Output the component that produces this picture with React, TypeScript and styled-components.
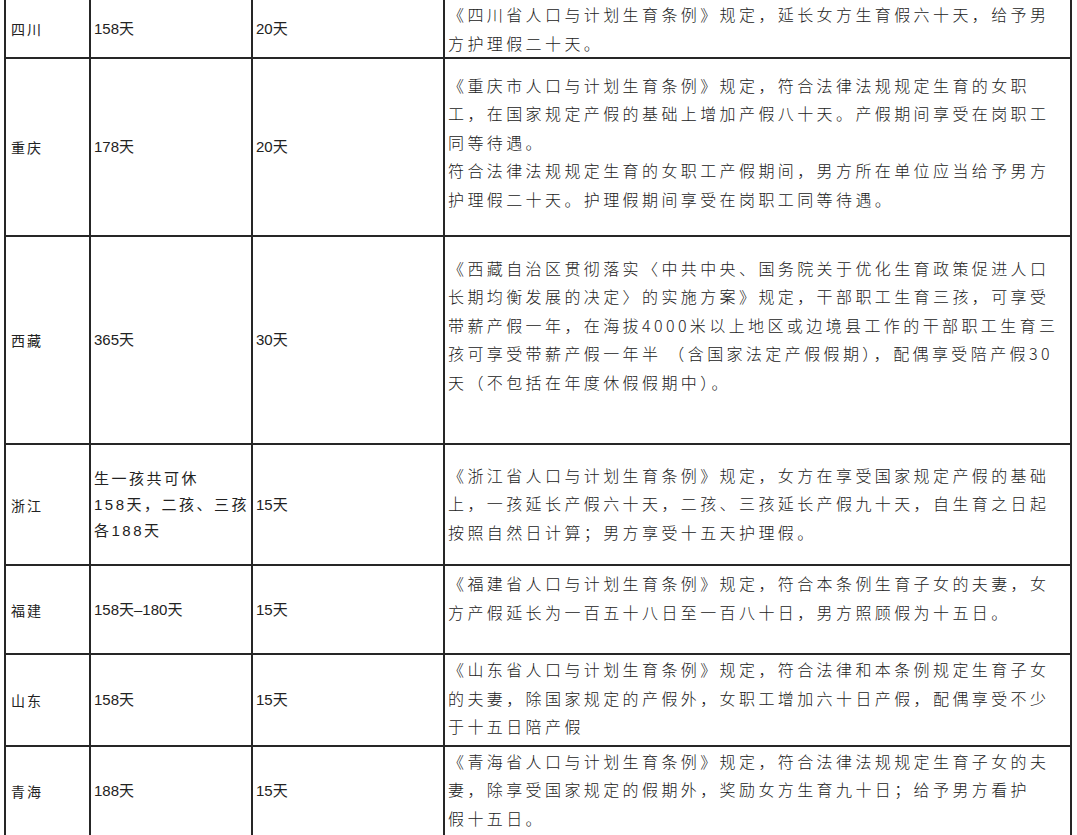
import styled, { createGlobalStyle } from 'styled-components';

type Row = {
  region: string;
  maternity: string[];
  paternity: string;
  policy: string[];
  height: number;
  lift?: number;
};

const rows: Row[] = [
  {
    region: '四川',
    maternity: ['158天'],
    paternity: '20天',
    policy: ['《四川省人口与计划生育条例》规定，延长女方生育假六十天，给予男', '方护理假二十天。'],
    height: 59,
  },
  {
    region: '重庆',
    maternity: ['178天'],
    paternity: '20天',
    policy: [
      '《重庆市人口与计划生育条例》规定，符合法律法规规定生育的女职',
      '工，在国家规定产假的基础上增加产假八十天。产假期间享受在岗职工',
      '同等待遇。',
      '符合法律法规规定生育的女职工产假期间，男方所在单位应当给予男方',
      '护理假二十天。护理假期间享受在岗职工同等待遇。',
    ],
    height: 178,
    lift: 10,
  },
  {
    region: '西藏',
    maternity: ['365天'],
    paternity: '30天',
    policy: [
      '《西藏自治区贯彻落实〈中共中央、国务院关于优化生育政策促进人口',
      '长期均衡发展的决定〉的实施方案》规定，干部职工生育三孩，可享受',
      '带薪产假一年，在海拔4000米以上地区或边境县工作的干部职工生育三',
      '孩可享受带薪产假一年半 （含国家法定产假假期），配偶享受陪产假30',
      '天（不包括在年度休假假期中）。',
    ],
    height: 208,
    lift: 30,
  },
  {
    region: '浙江',
    maternity: ['生一孩共可休', '158天，二孩、三孩', '各188天'],
    paternity: '15天',
    policy: [
      '《浙江省人口与计划生育条例》规定，女方在享受国家规定产假的基础',
      '上，一孩延长产假六十天，二孩、三孩延长产假九十天，自生育之日起',
      '按照自然日计算；男方享受十五天护理假。',
    ],
    height: 121,
    lift: 2,
  },
  {
    region: '福建',
    maternity: ['158天–180天'],
    paternity: '15天',
    policy: ['《福建省人口与计划生育条例》规定，符合本条例生育子女的夫妻，女', '方产假延长为一百五十八日至一百八十日，男方照顾假为十五日。'],
    height: 89,
    lift: 24,
  },
  {
    region: '山东',
    maternity: ['158天'],
    paternity: '15天',
    policy: [
      '《山东省人口与计划生育条例》规定，符合法律和本条例规定生育子女',
      '的夫妻，除国家规定的产假外，女职工增加六十日产假，配偶享受不少',
      '于十五日陪产假',
    ],
    height: 89,
    lift: 4,
  },
  {
    region: '青海',
    maternity: ['188天'],
    paternity: '15天',
    policy: [
      '《青海省人口与计划生育条例》规定，符合法律法规规定生育子女的夫',
      '妻，除享受国家规定的假期外，奖励女方生育九十日；给予男方看护',
      '假十五日。',
    ],
    height: 88,
    lift: 4,
  },
];

const GlobalStyle = createGlobalStyle`
  html, body {
    margin: 0;
    padding: 0;
    background: #ffffff;
    overflow: hidden;
  }
`;

const Page = styled.div`
  width: 1077px;
  height: 835px;
  overflow: hidden;
  background: #ffffff;
`;

const Table = styled.table`
  border-collapse: collapse;
  table-layout: fixed;
  width: 1068px;
  margin: -2px 0 0 4px;
  color: #222;
`;

const TableRow = styled.tr<{ $height: number }>`
  height: ${(p) => p.$height}px;
`;

const Cell = styled.td`
  border: 2px solid #262626;
  padding: 0 0 0 3px;
  vertical-align: middle;
  white-space: nowrap;
  overflow: hidden;
`;

const RegionCell = styled(Cell)`
  font-family: 'Noto Sans CJK SC', sans-serif;
  font-size: 14px;
  letter-spacing: 2px;
  padding-left: 5px;
`;

const DaysCell = styled(Cell)<{ $spaced?: boolean }>`
  font-family: 'Liberation Sans', 'Noto Sans CJK SC', sans-serif;
  font-size: 15px;
  line-height: 26px;
  letter-spacing: ${(p) => (p.$spaced ? '2.5px' : '0')};
`;

const PolicyCell = styled(Cell)<{ $lift: number }>`
  font-family: 'Noto Sans CJK SC', sans-serif;
  font-size: 16px;
  font-weight: 300;
  line-height: 28.5px;
  letter-spacing: 3.4px;
  padding-bottom: ${(p) => p.$lift}px;
`;

const Line = styled.div`
  white-space: pre;
`;

export default function App() {
  return (
    <Page>
      <GlobalStyle />
      <Table>
        <colgroup>
          <col style={{ width: 85 }} />
          <col style={{ width: 162 }} />
          <col style={{ width: 192 }} />
          <col />
        </colgroup>
        <tbody>
          {rows.map((r) => (
            <TableRow key={r.region} $height={r.height}>
              <RegionCell>{r.region}</RegionCell>
              <DaysCell $spaced={r.maternity.length > 1}>
                {r.maternity.map((m) => (
                  <Line key={m}>{m}</Line>
                ))}
              </DaysCell>
              <DaysCell>{r.paternity}</DaysCell>
              <PolicyCell $lift={r.lift ?? 0}>
                {r.policy.map((l) => (
                  <Line key={l}>{l}</Line>
                ))}
              </PolicyCell>
            </TableRow>
          ))}
        </tbody>
      </Table>
    </Page>
  );
}
